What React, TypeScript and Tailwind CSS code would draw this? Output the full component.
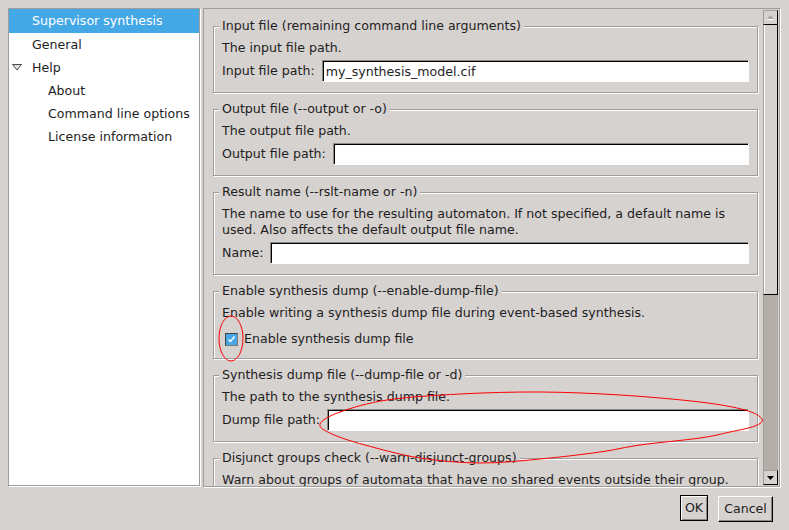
import type { ReactNode } from 'react'

type Pt = [number, number]

// closed Catmull-Rom curve through the points, for the hand-drawn marks
function smoothPath(pts: Pt[]) {
  const n = pts.length
  let d = `M${pts[0][0]},${pts[0][1]}`
  for (let i = 0; i < n; i++) {
    const p0 = pts[(i - 1 + n) % n]
    const p1 = pts[i]
    const p2 = pts[(i + 1) % n]
    const p3 = pts[(i + 2) % n]
    const c1 = [p1[0] + (p2[0] - p0[0]) / 6, p1[1] + (p2[1] - p0[1]) / 6]
    const c2 = [p2[0] - (p3[0] - p1[0]) / 6, p2[1] - (p3[1] - p1[1]) / 6]
    d += ` C${c1[0]},${c1[1]} ${c2[0]},${c2[1]} ${p2[0]},${p2[1]}`
  }
  return d + 'Z'
}

const dumpMark: Pt[] = [
  [320, 424], [340, 412], [387, 400], [460, 394], [540, 392], [620, 395],
  [700, 402], [745, 410], [762, 419], [755, 426], [730, 432], [700, 438],
  [640, 445], [600, 452], [540, 459], [480, 463], [420, 458], [365, 445], [332, 434],
]

function Group({ title, children, last }: { title: string; children: ReactNode; last?: boolean }) {
  return (
    <fieldset
      className={`border border-[#a09e9b] shadow-[inset_1px_1px_0_#fff,1px_1px_0_#fff] pl-[5px] pr-[8px] ${last ? 'pb-[10px]' : 'pb-[10px] mb-[8px]'}`}
    >
      <legend className="px-[3px] bg-[#d6d2d0] leading-[16px] whitespace-nowrap">{title}</legend>
      <div className="pl-[3px] pt-[6px]">{children}</div>
    </fieldset>
  )
}

function Field({ label, value = '' }: { label: string; value?: string }) {
  return (
    <div className="flex items-center gap-[7px] h-[22px] mt-[4px]">
      <span className="whitespace-nowrap leading-[16px]">{label}</span>
      <input
        readOnly
        value={value}
        className="flex-1 min-w-0 h-[22px] bg-white border border-[#8c8a87] border-r-white border-b-white shadow-[inset_1px_1px_0_#000] pl-[3px] outline-none text-[12.6px] text-[#1e1e1e]"
      />
    </div>
  )
}

function ScrollArrow({ up }: { up?: boolean }) {
  return (
    <div className="h-[15px] flex items-center justify-center border border-[#a09e9b] border-r-black border-b-black bg-[#d6d2d0]">
      {up ? (
        <svg width="7" height="5" viewBox="0 0 7 5">
          <polygon points="3.5,0 7,4 0,4" fill="#a8a5a2" />
          <rect x="0" y="4" width="7" height="1" fill="#fff" />
        </svg>
      ) : (
        <svg width="7" height="4" viewBox="0 0 7 4">
          <polygon points="0,0 7,0 3.5,4" fill="#000" />
        </svg>
      )}
    </div>
  )
}

export default function App() {
  const tree = [
    { label: 'Supervisor synthesis', depth: 0, selected: true },
    { label: 'General', depth: 0 },
    { label: 'Help', depth: 0, expanded: true },
    { label: 'About', depth: 1 },
    { label: 'Command line options', depth: 1 },
    { label: 'License information', depth: 1 },
  ]

  return (
    <div className="relative w-[789px] h-[530px] bg-[#d6d2d0] font-['DejaVu_Sans',sans-serif] text-[12.6px] text-[#1e1e1e] pt-[8px] pl-[8px] overflow-hidden">
      <div className="flex">
        {/* options tree */}
        <div className="w-[192px] h-[478px] bg-white border border-[#a09e9b] shadow-[1px_1px_0_#fff] flex flex-col">
          {tree.map((item, i) => (
            <div
              key={item.label}
              className={`relative flex items-center whitespace-nowrap pt-[1px] ${i === 0 ? 'h-[24px]' : 'h-[23px]'} ${item.selected ? 'bg-[#45a8e6] text-white' : ''} ${item.depth ? 'pl-[39px]' : 'pl-[23px]'}`}
            >
              {item.expanded && (
                <svg className="absolute left-[3px] top-[8px]" width="10" height="7" viewBox="0 0 10 7">
                  <polygon points="0.5,0.5 9.5,0.5 5,6" fill="#e4e2e0" stroke="#4a4a4a" strokeWidth="1" />
                </svg>
              )}
              {item.label}
            </div>
          ))}
        </div>

        {/* option pages */}
        <div className="ml-[3px] w-[577px] h-[479px] border border-[#a09e9b] shadow-[1px_1px_0_#fff] flex">
          <div className="flex-1 min-w-0 overflow-hidden pl-[9px] pr-[5px] pt-[9px]">
            <Group title="Input file (remaining command line arguments)">
              <div className="leading-[16px]">The input file path.</div>
              <Field label="Input file path:" value="my_synthesis_model.cif" />
            </Group>
            <Group title="Output file (--output or -o)">
              <div className="leading-[16px]">The output file path.</div>
              <Field label="Output file path:" />
            </Group>
            <Group title="Result name (--rslt-name or -n)">
              <div className="leading-[16px] whitespace-nowrap">
                The name to use for the resulting automaton. If not specified, a default name is
                <br />
                used. Also affects the default output file name.
              </div>
              <Field label="Name:" />
            </Group>
            <fieldset className="border border-[#a09e9b] shadow-[inset_1px_1px_0_#fff,1px_1px_0_#fff] pl-[5px] pr-[8px] pb-[8px] mb-[8px]">
              <legend className="px-[3px] bg-[#d6d2d0] leading-[16px] whitespace-nowrap">
                Enable synthesis dump (--enable-dump-file)
              </legend>
              <div className="pl-[3px] pt-[6px]">
                <div className="leading-[16px] whitespace-nowrap">
                  Enable writing a synthesis dump file during event-based synthesis.
                </div>
                <div className="flex items-center h-[22px] mt-[7px] gap-[6px] pl-[3px]">
                  <div className="w-[13px] h-[13px] border border-[#3f3f3f] border-r-[#7a7a7a] border-b-[#7a7a7a] bg-[#45a8e6] flex items-center justify-center">
                    <svg width="9" height="8" viewBox="0 0 9 8">
                      <path d="M1.5 4.5 L3.5 6.5 L7.5 1.5" fill="none" stroke="#fff" strokeWidth="1.4" />
                    </svg>
                  </div>
                  <span className="leading-[16px]">Enable synthesis dump file</span>
                </div>
              </div>
            </fieldset>
            <Group title="Synthesis dump file (--dump-file or -d)">
              <div className="leading-[16px]">The path to the synthesis dump file.</div>
              <Field label="Dump file path:" />
            </Group>
            <Group title="Disjunct groups check (--warn-disjunct-groups)" last>
              <div className="leading-[16px] whitespace-nowrap">
                Warn about groups of automata that have no shared events outside their group.
              </div>
            </Group>
          </div>

          {/* scrollbar */}
          <div className="w-[15px] mt-[1px] mb-[1px] mr-[1px] flex flex-col">
            <ScrollArrow up />
            <div className="h-[270px] bg-[#d6d2d0] border-l border-[#a09e9b] border-r border-r-black border-b border-b-black shadow-[inset_1px_0_0_#fff]" />
            <div className="flex-1 bg-[#b4ada8] border-l border-[#a09e9b]" />
            <ScrollArrow />
          </div>
        </div>
      </div>

      {/* dialog buttons */}
      <div className="flex justify-end items-start gap-[10px] mt-[8px] pr-[16px]">
        <button className="w-[28px] h-[26px] border border-black bg-[#d6d2d0] shadow-[inset_1px_1px_0_#fff,inset_-1px_-1px_0_#8a8784] text-[12.6px] leading-none">
          OK
        </button>
        <button className="w-[55px] h-[26px] mt-[1px] border border-t-white border-l-white border-r-black border-b-black bg-[#d6d2d0] shadow-[inset_-1px_-1px_0_#8a8784] text-[12.6px] leading-none">
          Cancel
        </button>
      </div>

      {/* red annotation marks */}
      <svg className="absolute left-0 top-0 pointer-events-none" width="789" height="530" viewBox="0 0 789 530">
        <ellipse cx="231" cy="338.5" rx="12" ry="22.5" fill="none" stroke="#ff0000" strokeWidth="1" />
        <path d={smoothPath(dumpMark)} fill="none" stroke="#ff0000" strokeWidth="1" />
      </svg>
    </div>
  )
}
